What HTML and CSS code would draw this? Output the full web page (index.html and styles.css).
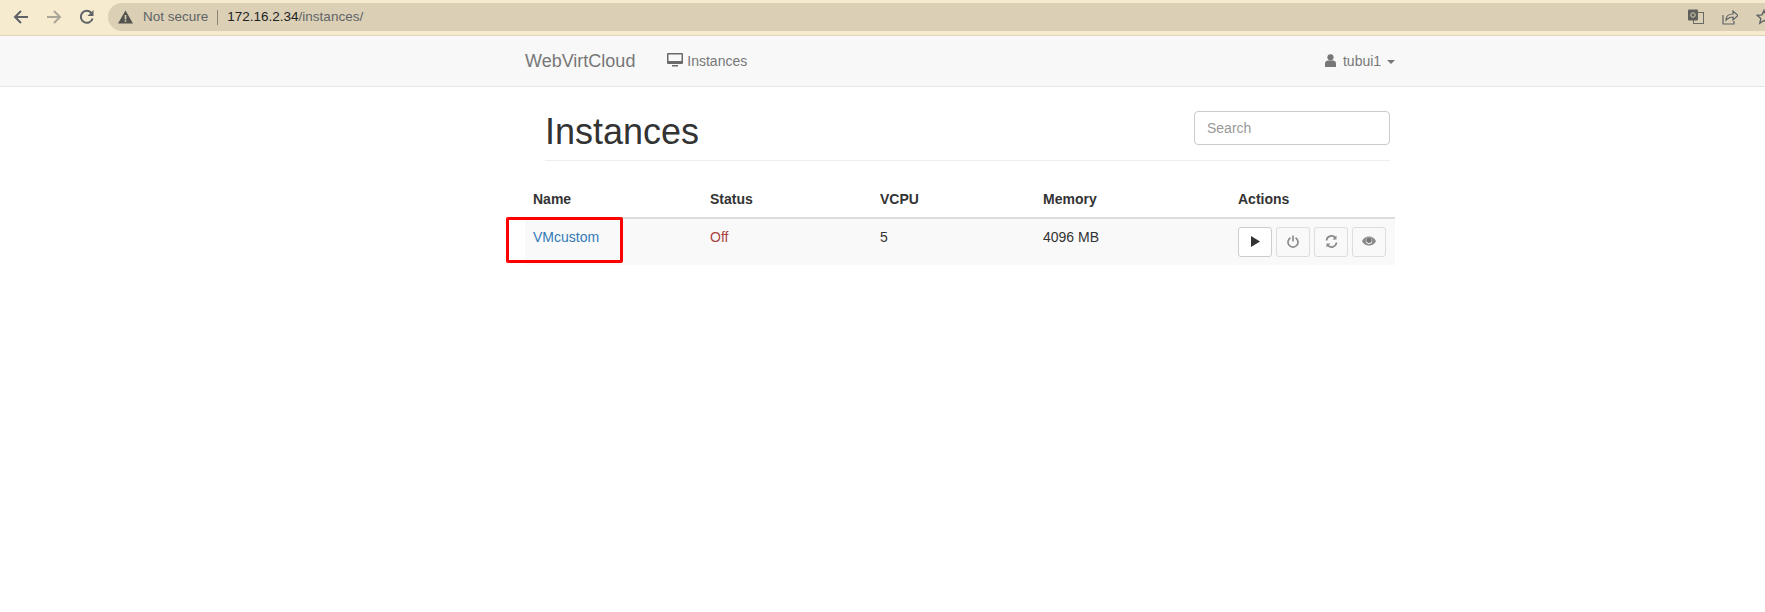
FILE: index.html
```html
<!DOCTYPE html>
<html lang="en">
<head>
  <meta charset="UTF-8">
  <title>Instances</title>
  <link rel="stylesheet" href="styles.css">
</head>
<body>
  <div class="browser-bar">
    <svg class="nav-icon" width="16" height="16" viewBox="0 0 16 16"><path d="M15 8H2M8 2L2 8l6 6" fill="none" stroke="#5f6368" stroke-width="2"/></svg>
    <svg class="nav-icon" width="16" height="16" viewBox="0 0 16 16"><path d="M1 8h13M8 2l6 6-6 6" fill="none" stroke="#aaa697" stroke-width="2"/></svg>
    <svg class="nav-icon" width="16" height="16" viewBox="0 0 16 16"><path d="M13.6 9.500A6 6 0 1 1 12.300 3.800" fill="none" stroke="#5f6368" stroke-width="2"/><path d="M14.500 1v6h-6z" fill="#5f6368"/></svg>
    <div class="omnibox">
      <svg class="warn-icon" width="15" height="14" viewBox="0 0 15 14"><path d="M7.500 0.500L15 13.500H0zM6.700 5v4.400h1.600V5zM6.700 10.200v1.600h1.600v-1.600z" fill="#53534f" fill-rule="evenodd"/></svg>
      <span class="not-secure">Not secure</span>
      <span class="omni-sep"></span>
      <span class="url">172.16.2.34<span class="url-path">/instances/</span></span>
      <span class="omni-icons">
        <svg width="16" height="16" viewBox="0 0 16 16"><rect x="5.500" y="3.500" width="10" height="11" fill="none" stroke="#6b6b66"/><rect x="0" y="0.500" width="10" height="11" rx="1" fill="#5f5f5c"/><circle cx="5" cy="6" r="2.200" fill="none" stroke="#dbd0b5"/></svg>
        <svg width="16" height="16" viewBox="0 0 16 16"><path d="M1 6v9h11v-3" fill="none" stroke="#5f6368" stroke-width="1.200"/><path d="M4 11c0-4 3-6 7-6V2l5 4.500L11 11V8c-3 0-5 1-7 3z" fill="none" stroke="#5f6368" stroke-width="1.200"/></svg>
        <svg width="16" height="16" viewBox="0 0 16 16"><path d="M8 1.500l2 4.400 4.700.5-3.500 3.200 1 4.700L8 11.500l-4.200 2.800 1-4.700L1.300 6.400l4.700-.5z" fill="none" stroke="#5f6368" stroke-width="1.400"/></svg>
      </span>
    </div>
  </div>

  <nav class="navbar">
    <div class="navbar-inner">
      <a class="brand">WebVirtCloud</a>
      <a class="nav-link">
        <svg width="16" height="14" viewBox="0 0 16 14"><path d="M1 0h14a1 1 0 0 1 1 1v9a1 1 0 0 1-1 1H1a1 1 0 0 1-1-1V1a1 1 0 0 1 1-1zM1.500 1.500v6.500h13V1.500z" fill="#6a6a6a" fill-rule="evenodd"/><path d="M5 12h6v1.500H5z" fill="#6a6a6a"/></svg>
        Instances
      </a>
      <a class="nav-user">
        <svg width="11" height="13" viewBox="0 0 11 13"><circle cx="5.500" cy="3.300" r="3.100" fill="#777"/><path d="M0 13V9.500C0 7.500 1.500 6.500 3 6.500h5c1.500 0 3 1 3 3V13z" fill="#777"/></svg>
        tubui1
        <span class="caret"></span>
      </a>
    </div>
  </nav>

  <main class="content">
    <div class="page-header">
      <h1>Instances</h1>
      <input class="search" type="text" placeholder="Search">
    </div>

    <table class="instances">
      <thead>
        <tr>
          <th class="col-name">Name</th>
          <th class="col-status">Status</th>
          <th class="col-vcpu">VCPU</th>
          <th class="col-mem">Memory</th>
          <th>Actions</th>
        </tr>
      </thead>
      <tbody>
        <tr>
          <td class="cell-name"><a class="vm-link">VMcustom</a><span class="highlight"></span></td>
          <td class="off">Off</td>
          <td>5</td>
          <td>4096 MB</td>
          <td class="cell-actions">
            <div class="actions">
              <button class="btn btn-start"><svg width="9" height="11" viewBox="0 0 9 11"><path d="M0 0l9 5.500-9 5.500z" fill="#333"/></svg></button>
              <button class="btn btn-off"><svg width="12" height="13" viewBox="0 0 12 13"><path d="M3.500 2.800a5 5 0 1 0 5 0M6 0.500v6" fill="none" stroke="#888" stroke-width="1.600"/></svg></button>
              <button class="btn btn-off"><svg width="13" height="13" viewBox="0 0 13 13"><path d="M1.500 5.500A5 5 0 0 1 10.500 3M11.500 7.500A5 5 0 0 1 2.500 10" fill="none" stroke="#888" stroke-width="1.700"/><path d="M11.500 0.500v4h-4zM1.500 12.500v-4h4z" fill="#888"/></svg></button>
              <button class="btn btn-off"><svg width="14" height="10" viewBox="0 0 14 10"><path d="M0 5.200C1.500 2 4 .5 7 .5s5.500 1.500 7 4.700C12.500 8 10 9.500 7 9.500S1.500 8 0 5.200z" fill="#888"/><circle cx="7" cy="4.800" r="3.200" fill="#f9f9f9"/><circle cx="7" cy="4.200" r="2.700" fill="#777"/></svg></button>
            </div>
          </td>
        </tr>
      </tbody>
    </table>
  </main>
</body>
</html>
```

FILE: styles.css
```css
body {
  margin: 0;
  font-family: "Liberation Sans", Arial, sans-serif;
  font-size: 14px;
  line-height: 20px;
  color: #333;
  background-color: #fff;
  overflow: hidden;
}
.browser-bar {
  display: flex;
  align-items: center;
  height: 36px;
  box-sizing: border-box;
  padding: 0 0 1px 13px;
  background-color: #f7ebcf;
  border-bottom: 1px solid #e2d4b4;
}
.nav-icon {
  margin-right: 17px;
}
.omnibox {
  display: flex;
  align-items: center;
  flex: 1;
  height: 28px;
  margin-left: -4px;
  padding-left: 10px;
  border-radius: 14px 0 0 14px;
  background-color: #dbd0b5;
  font-size: 13.500px;
}
.warn-icon {
  margin-right: 10px;
}
.not-secure {
  color: #5f6368;
}
.omni-sep {
  width: 1px;
  height: 15px;
  margin: 0 9px;
  background-color: #8a8472;
}
.url {
  color: #202124;
}
.url-path {
  color: #5f6368;
}
.omni-icons {
  display: flex;
  gap: 18px;
  margin-left: auto;
  margin-right: -7px;
}
.navbar {
  height: 51px;
  box-sizing: border-box;
  background-color: #f8f8f8;
  border-bottom: 1px solid #e7e7e7;
}
.navbar-inner {
  display: flex;
  align-items: center;
  width: 870px;
  height: 50px;
  margin-left: 525px;
  color: #777;
}
.brand {
  font-size: 18px;
  margin-right: 32px;
}
.nav-link svg {
  vertical-align: -1px;
}
.nav-user {
  margin-left: auto;
}
.nav-user svg {
  margin-right: 3px;
  vertical-align: -1px;
}
.caret {
  display: inline-block;
  margin-left: 2px;
  vertical-align: middle;
  border-top: 4px solid #777;
  border-left: 4px solid transparent;
  border-right: 4px solid transparent;
}
.content {
  width: 885px;
  margin-left: 510px;
}
.page-header {
  display: flex;
  justify-content: space-between;
  align-items: flex-start;
  margin: 0 5px 0 35px;
  height: 73px;
  border-bottom: 1px solid #eee;
}
h1 {
  margin: 25px 0 0;
  font-size: 36px;
  font-weight: 500;
  line-height: 40px;
  color: #333;
}
.search {
  width: 196px;
  height: 34px;
  box-sizing: border-box;
  margin-top: 24px;
  padding: 6px 12px;
  font: 14px "Liberation Sans", Arial, sans-serif;
  color: #555;
  border: 1px solid #ccc;
  border-radius: 4px;
}
.search::placeholder {
  color: #999;
}
.instances {
  width: 870px;
  margin: 20px 0 0 15px;
  border-collapse: collapse;
  table-layout: fixed;
}
th {
  padding: 8px;
  text-align: left;
  font-weight: 700;
  border-bottom: 2px solid #ddd;
}
td {
  padding: 8px;
  vertical-align: top;
  background-color: #f9f9f9;
  height: 30px;
}
.col-name {
  width: 161px;
}
.col-status {
  width: 154px;
}
.col-vcpu {
  width: 147px;
}
.col-mem {
  width: 179px;
}
.cell-name {
  position: relative;
}
.vm-link {
  color: #337ab7;
}
.highlight {
  position: absolute;
  left: -19px;
  top: -2px;
  width: 111px;
  height: 40px;
  border: 3px solid #f00;
  border-radius: 2px;
}
.off {
  color: #a94442;
}
.actions {
  display: flex;
  gap: 4px;
}
.btn {
  display: flex;
  align-items: center;
  justify-content: center;
  width: 34px;
  height: 30px;
  padding: 0 0 2px;
  background-color: #fff;
  border: 1px solid #ccc;
  border-radius: 3px;
}
.btn-off {
  background-color: #f9f9f9;
  border-color: #ddd;
}
```
